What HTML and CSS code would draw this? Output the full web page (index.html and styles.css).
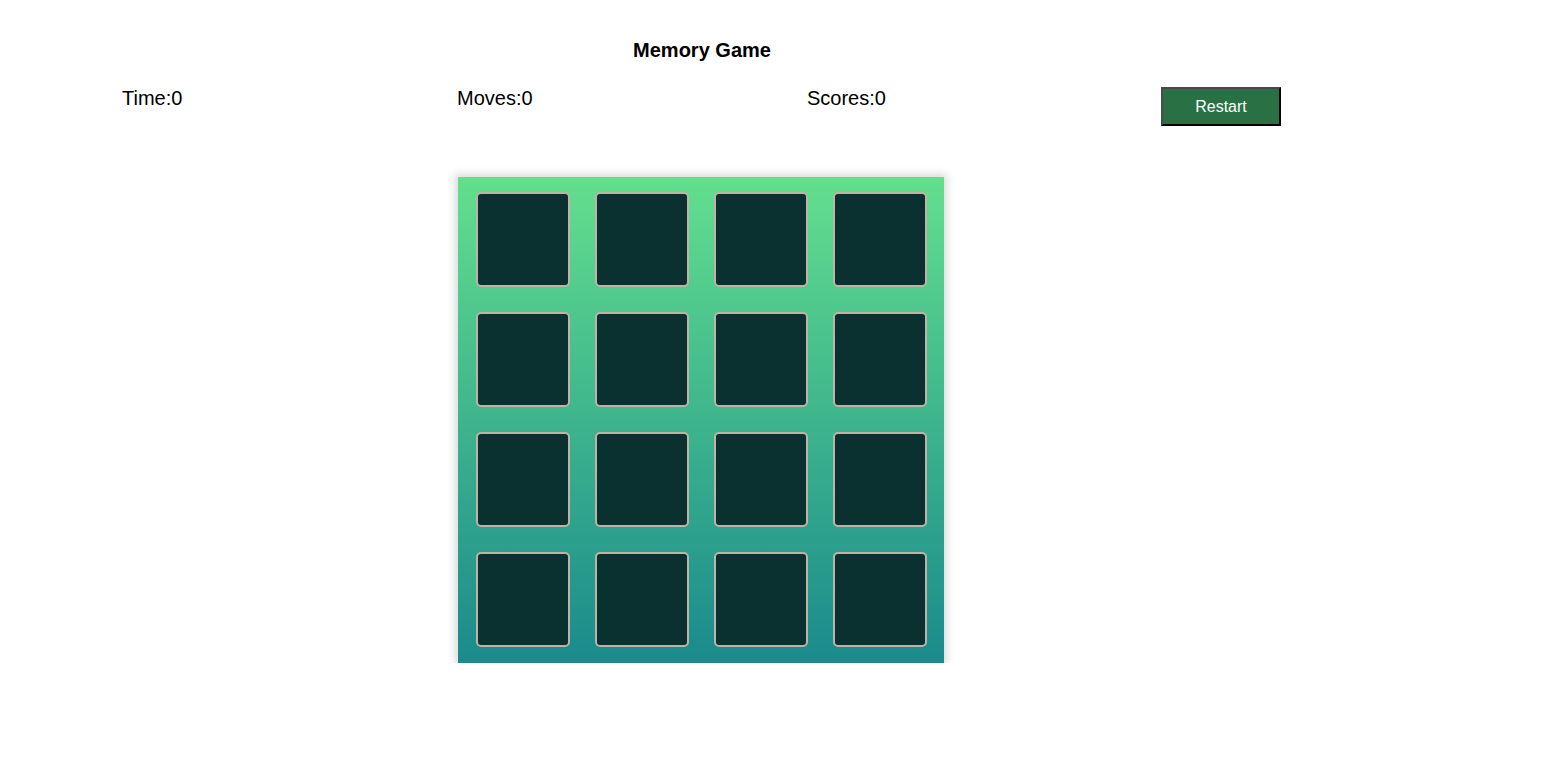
FILE: index.html
```html
<!DOCTYPE html>
<html>
<head>
<meta charset="utf-8">
<link rel="stylesheet" href="styles.css">
</head>
<body>
<div class="wrap">
  <h1 class="title">Memory Game</h1>
  <div class="stats">
    <div class="stat stat-time">Time:0</div>
    <div class="stat stat-moves">Moves:0</div>
    <div class="stat stat-scores">Scores:0</div>
    <div class="stat stat-btn"><button class="restart">Restart</button></div>
  </div>
  <div class="board-row">
    <div class="board">
      <div class="card"></div><div class="card"></div><div class="card"></div><div class="card"></div>
      <div class="card"></div><div class="card"></div><div class="card"></div><div class="card"></div>
      <div class="card"></div><div class="card"></div><div class="card"></div><div class="card"></div>
      <div class="card"></div><div class="card"></div><div class="card"></div><div class="card"></div>
    </div>
  </div>
</div>
</body>
</html>
```

FILE: styles.css
```css
* { box-sizing: border-box; }
html, body { margin: 0; padding: 0; background: #fff; }
body { font-family: "Liberation Sans", Arial, sans-serif; color: #000; }
.wrap { width: 1400px; margin-left: 1px; padding-top: 38px; }
.title {
  margin: 0;
  padding-left: 2px;
  font-size: 20px;
  font-weight: bold;
  text-align: center;
  line-height: 24px;
}
.stats {
  display: grid;
  grid-template-columns: 335px 350px 354px 120px;
  margin-top: 24px;
  padding-left: 121px;
  height: 62px;
}
.stat { font-size: 20px; line-height: 24px; }
.restart {
  display: block;
  margin-top: 1px;
  width: 120px;
  height: 39px;
  background: #2a7045;
  color: #fff;
  font-family: "Liberation Sans", Arial, sans-serif;
  font-size: 16px;
  border: 2px solid;
  border-color: #4a4a4a #000 #000 #4a4a4a;
  padding: 0;
}
.board-row { display: flex; justify-content: center; padding-top: 29px; }
.board {
  width: 486px;
  height: 486px;
  padding: 15px 17px 16px 18px;
  display: grid;
  grid-template-columns: repeat(4, 94px);
  grid-template-rows: repeat(4, 95px);
  column-gap: 25px;
  row-gap: 25px;
  background: linear-gradient(to bottom, #63df8e, #1a8a8c);
  box-shadow: 0 0 8px 3px rgba(0,0,0,0.15);
}
.card {
  background: #0a3030;
  border: 2px solid #bdb3a8;
  border-radius: 5px;
}
```
